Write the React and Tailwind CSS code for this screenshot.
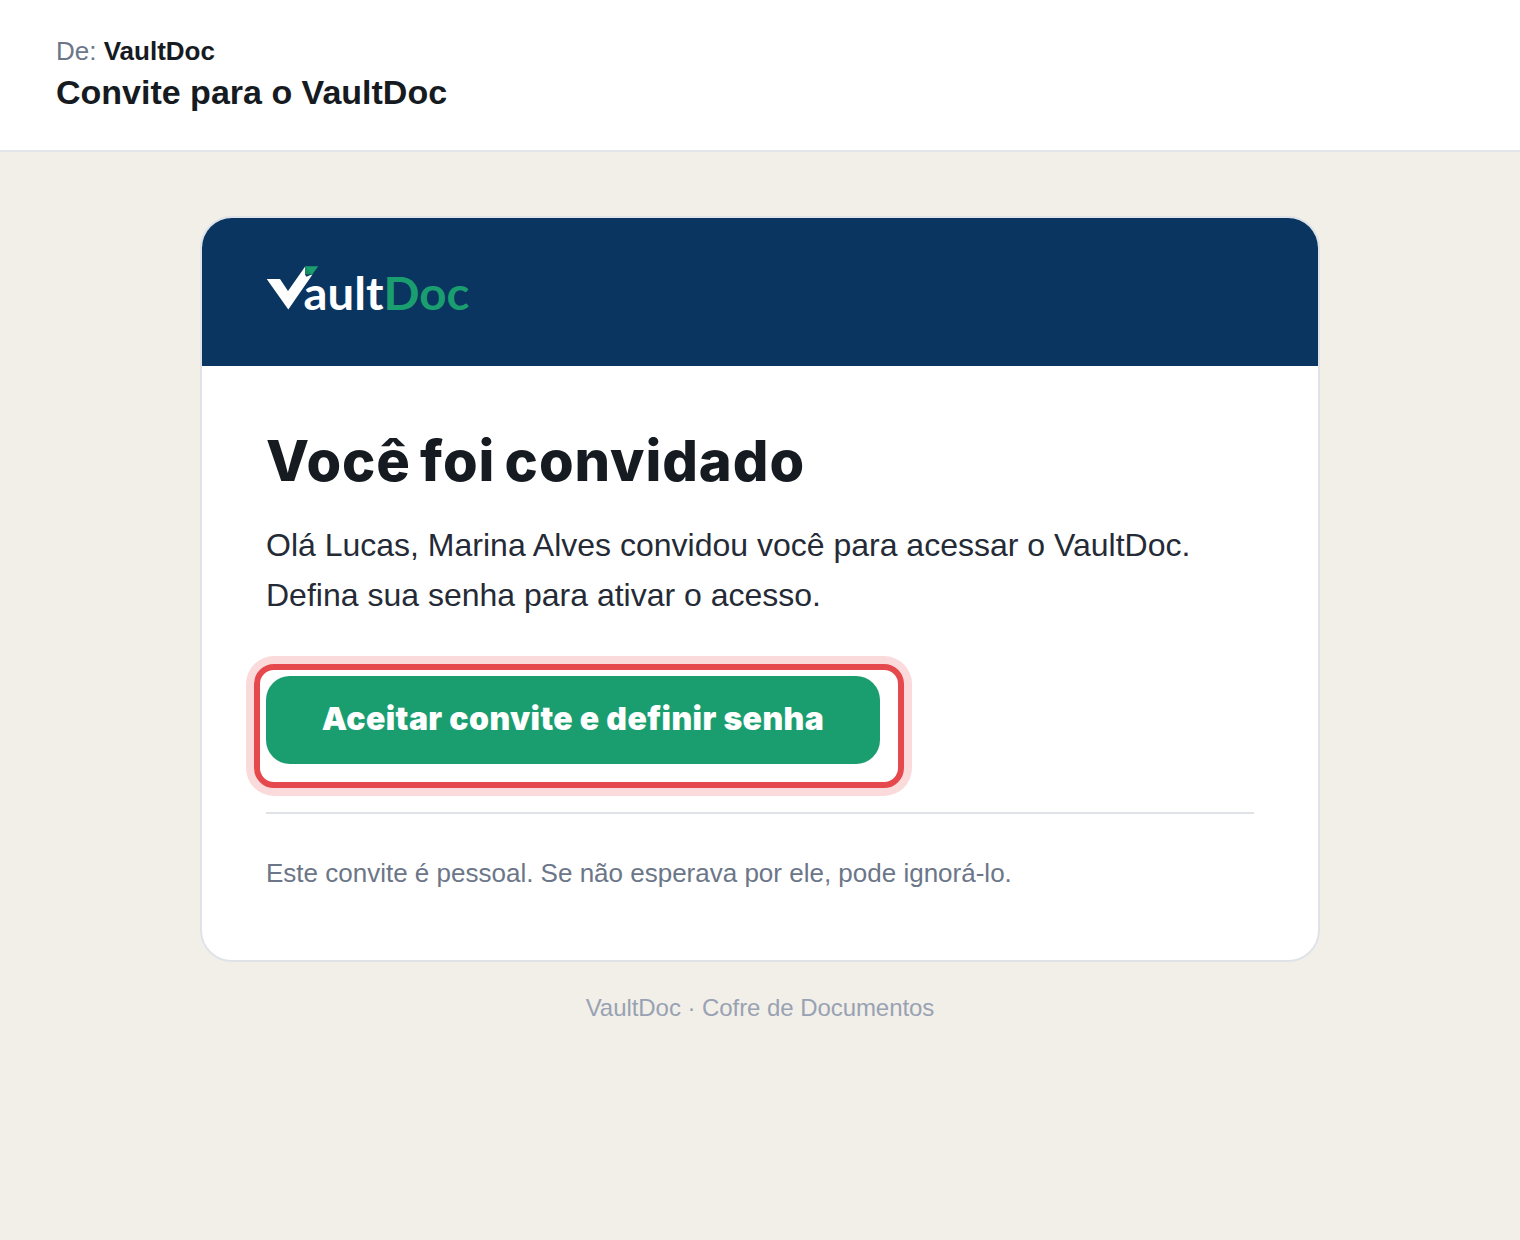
import React from 'react';

const Logo = ({ className }) => (
    <svg className={className} viewBox="0 0 208 64" role="img" aria-label="VaultDoc">
        <path d="M0.7 15 H14 L22 27 L39 2.7 V10 L46.5 10.5 L22.3 45.5 Z" fill="#ffffff" />
        <path d="M39 2.3 H52.3 L45.8 11 H39 Z" fill="#1b9e6f" />
        <path d="M39 2.3 L45.8 11 H39 Z" fill="#17885f" />
        <path d="M39 10.5 H45.5 L40.5 12.8 Z" fill="#0a3560" />
        <text x="37.5" y="46" fontSize="46" fontWeight="700" textLength="80" lengthAdjust="spacingAndGlyphs" fill="#ffffff" className="font-['Lato',sans-serif]">ault</text>
        <text x="117.5" y="46" fontSize="46" fontWeight="700" textLength="86" lengthAdjust="spacingAndGlyphs" fill="#1b9e6f" className="font-['Lato',sans-serif]">Doc</text>
    </svg>
);

const MailHeader = () => (
    <header className="h-[152px] bg-white border-b-2 border-[#e2e6ea] px-14 pt-9">
        <p className="text-[26px] leading-[30px] text-[#6b7688]">
            De: <strong className="font-bold text-[#161b22]">VaultDoc</strong>
        </p>
        <h1 className="mt-1.5 text-[34px] leading-10 font-bold text-[#161b22]">
            <span>Convite para o VaultDoc</span>
        </h1>
    </header>
);

const InviteCard = () => (
    <section className="h-[746px] w-[1120px] overflow-hidden rounded-[32px] border-2 border-[#dfe3e8] bg-white">
        <div className="h-[148px] bg-[#0a3560] px-16 pt-[46px]">
            <Logo className="h-16 w-52" />
        </div>

        <div className="px-16 pt-16">
            <h2 className="font-['Inter',sans-serif] text-[56px] leading-[62px] font-extrabold tracking-[0.95px] [word-spacing:-4px] text-[#161b22]">
                <span>Você foi convidado</span>
            </h2>
            <p className="mt-7 text-[32px] leading-[50px] text-[#252b36]">
                <span>Olá Lucas, Marina Alves convidou você para acessar o VaultDoc.</span>
                <br />
                <span>Defina sua senha para ativar o acesso.</span>
            </p>

            <div className="-ml-3 mt-11 h-[124px] w-[650px] rounded-[20px] border-[6px] border-[#e5484d] p-1.5 ring-8 ring-[#e5484d]/20">
                <button className="flex h-[88px] w-[614px] items-center justify-center rounded-3xl bg-[#1b9e6f] pb-0.5 font-['Inter',sans-serif] text-[32px] font-black tracking-[0.38px] text-white">
                    <span>Aceitar convite e definir senha</span>
                </button>
            </div>

            <div className="mt-6 border-t-2 border-[#dfe3e8] pt-11">
                <p className="text-[26px] leading-[30px] text-[#6b7688]">
                    Este convite é pessoal. Se não esperava por ele, pode ignorá-lo.
                </p>
            </div>
        </div>
    </section>
);

export default function App() {
    return (
        <div className="min-h-[1240px] bg-[#f2efe8] font-['Liberation_Sans',Arial,sans-serif]">
            <MailHeader />
            <main className="flex flex-col items-center pt-16">
                <InviteCard />
                <p className="mt-8 text-2xl leading-7 tracking-[-0.06px] text-[#98a2b3]">VaultDoc · Cofre de Documentos</p>
            </main>
        </div>
    );
}
